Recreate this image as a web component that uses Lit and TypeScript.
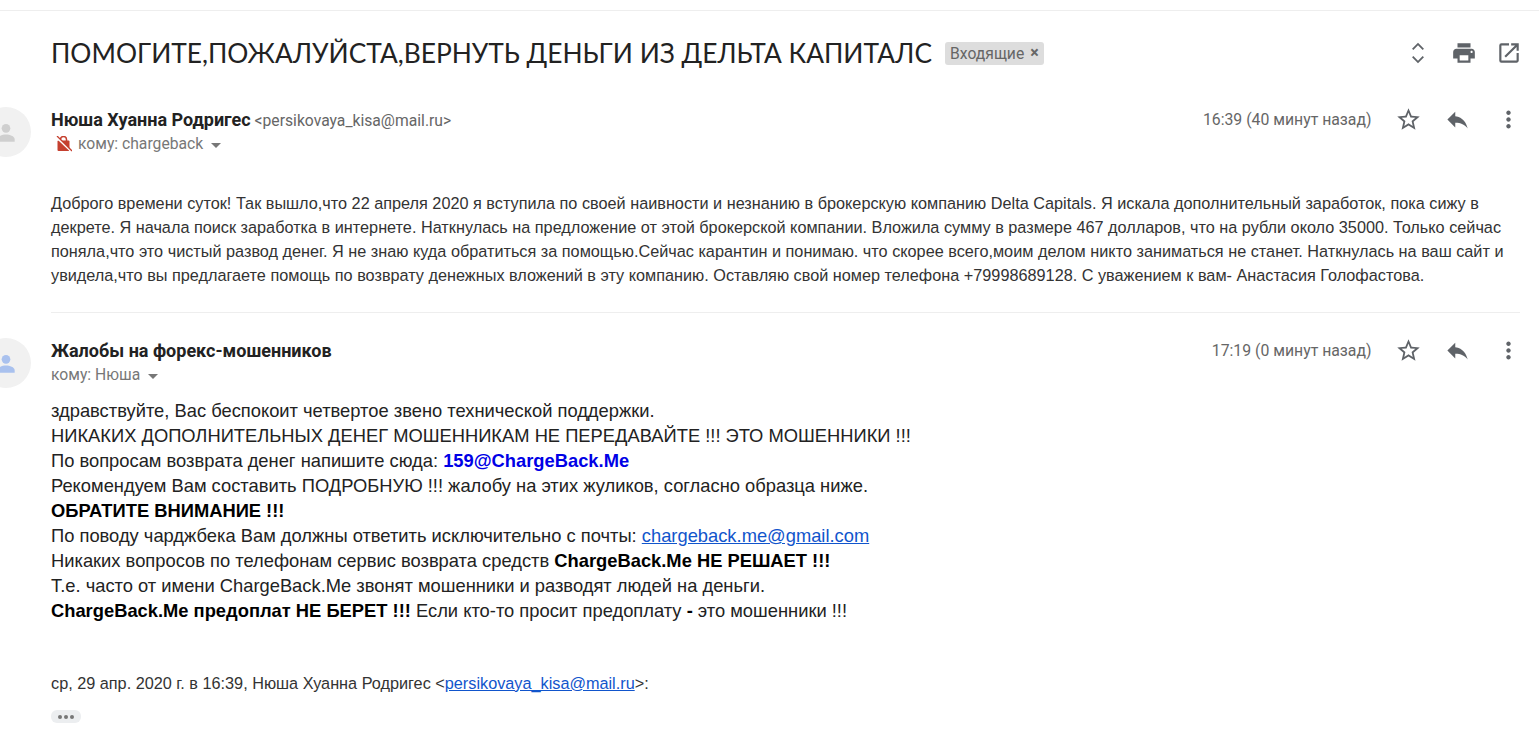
import { LitElement, html, css, svg } from "lit";
import { customElement } from "lit/decorators.js";

const star = svg`<path d="M22 9.24l-7.19-.62L12 2 9.19 8.63 2 9.24l5.46 4.73L5.82 21 12 17.27 18.18 21l-1.63-7.03L22 9.24zM12 15.4l-3.76 2.27 1-4.28-3.32-2.88 4.38-.38L12 6.1l1.71 4.04 4.38.38-3.32 2.88 1 4.28L12 15.4z"/>`;
const reply = svg`<path d="M10 9V5l-7 7 7 7v-4.1c5 0 8.5 1.6 11 5.1-1-5-4-10-11-11z"/>`;
const more = svg`<path d="M12 8c1.1 0 2-.9 2-2s-.9-2-2-2-2 .9-2 2 .9 2 2 2zm0 2c-1.1 0-2 .9-2 2s.9 2 2 2 2-.9 2-2-.9-2-2-2zm0 6c-1.1 0-2 .9-2 2s.9 2 2 2 2-.9 2-2-.9-2-2-2z"/>`;
const person = svg`<circle cx="12" cy="8.6" r="4"/><path d="M12 14.4c-3.4 0-8 1.6-8 4.2V21h16v-2.4c0-2.6-4.6-4.2-8-4.2z"/>`;

@customElement("app-root")
export class AppRoot extends LitElement {
  static styles = css`
    :host { display: block; height: 753px; overflow: hidden; background: #fff; color: #222; font-family: "Liberation Sans", Arial, sans-serif; }
    .page { padding-top: 10px; }
    .topline { height: 1px; background: #eee; }
    .subject { display: flex; align-items: center; height: 84px; padding: 0 17px 0 51px; }
    .title { font-family: Lato, sans-serif; font-size: 26.33px; color: #222; white-space: nowrap; }
    .chip { display: flex; align-items: center; gap: 6px; margin-left: 13px; height: 23px; padding: 0 5px; background: #ddd; border-radius: 3px; color: #666; font: 15.7px Roboto, sans-serif; }
    .chip b { font-weight: 700; font-size: 16px; line-height: 1; }
    .top-icons { margin-left: auto; display: flex; gap: 19.5px; align-items: center; }
    .top-icons svg { width: 26px; height: 26px; fill: #5f6368; display: block; }
    .msg { display: grid; grid-template-columns: 51px 1fr; }
    .avatar-cell { position: relative; }
    .avatar { position: absolute; left: -19px; top: 0; width: 50px; height: 50px; border-radius: 50%; background: #f1f1f1; display: flex; align-items: center; justify-content: center; }
    .avatar svg { width: 26px; height: 26px; fill: #cfcfcf; }
    .avatar.blue svg { fill: #a9c1ee; }
    .head { display: flex; justify-content: space-between; padding-right: 17px; }
    .from { font: 16px/26px Roboto, sans-serif; white-space: nowrap; }
    .name { font-weight: 700; font-size: 18px; color: #222; }
    .addr { font-size: 15.7px; color: #666; }
    .to { display: flex; align-items: center; font: 15.7px/24px Roboto, sans-serif; color: #777; height: 20px; }
    .caret { width: 0; height: 0; border: 5px solid transparent; border-top-color: #777; border-bottom: 0; margin-left: 8px; margin-top: 2px; }
    .flag { width: 16px; height: 16px; margin: 0 6px 0 5px; display: block; }
    .actions { display: flex; align-items: center; height: 24px; }
    .time { font: 15.8px Roboto, sans-serif; color: #666; margin-right: 23.5px; }
    .actions svg { width: 27px; height: 27px; flex: none; fill: #5f6368; display: block; }
    .actions .reply { margin-left: 22px; }
    .actions .dots { margin-left: 24px; }
    .body1 { font: 16.25px/24px "Liberation Sans", Arial, sans-serif; color: #333; margin-top: 37px; padding-right: 17px; }
    .divider { height: 1px; background: #eee; margin: 25px 19px 0 0; }
    .body2 { font: 18.33px/25px "Liberation Sans", Arial, sans-serif; color: #222; margin-top: 13px; white-space: nowrap; }
    .body2 strong { color: #000; }
    .blue-link { color: #0000e6; font-weight: 700; }
    a { color: #1155cc; }
    .quote { font: 16.25px/20px "Liberation Sans", Arial, sans-serif; color: #333; margin-top: 50px; }
    .ell { margin-top: 17px; width: 30px; height: 13px; background: #eceef0; border-radius: 6px; display: flex; align-items: center; justify-content: center; gap: 2px; }
    .ell i { width: 4px; height: 4px; border-radius: 50%; background: #777; display: block; }
    .msg1 { padding-top: 12px; }
    .msg2 { padding-top: 25px; }
  `;

  private actions(time: string) {
    return html`<div class="actions">
      <span class="time">${time}</span>
      <svg viewBox="0 0 24 24">${star}</svg>
      <svg class="reply" viewBox="0 0 24 24">${reply}</svg>
      <svg class="dots" viewBox="0 0 24 24">${more}</svg>
    </div>`;
  }

  render() {
    return html`<div class="page">
      <div class="topline"></div>
      <div class="subject">
        <span class="title">ПОМОГИТЕ,ПОЖАЛУЙСТА,ВЕРНУТЬ ДЕНЬГИ ИЗ ДЕЛЬТА КАПИТАЛС</span>
        <span class="chip">Входящие <b>×</b></span>
        <div class="top-icons">
          <svg viewBox="0 0 24 24"><path d="M12 2.5 6.500 8l1.200 1.200L12 4.900l4.300 4.300L17.500 8zM12 21.500l5.500-5.500-1.200-1.200-4.300 4.300-4.300-4.300L6.500 16z"/></svg>
          <svg viewBox="0 0 24 24"><path d="M19 8H5c-1.660 0-3 1.340-3 3v6h4v4h12v-4h4v-6c0-1.660-1.340-3-3-3zm-3 11H8v-5h8v5zm3-7c-.55 0-1-.45-1-1s.45-1 1-1 1 .45 1 1-.45 1-1 1zm-1-9H6v4h12V3z"/></svg>
          <svg viewBox="0 0 24 24"><path d="M19 19H5V5h7V3H5a2 2 0 0 0-2 2v14a2 2 0 0 0 2 2h14c1.100 0 2-.9 2-2v-7h-2v7zM14 3v2h3.590l-9.830 9.830 1.410 1.410L19 6.410V10h2V3h-7z"/></svg>
        </div>
      </div>
      <div class="msg msg1">
        <div class="avatar-cell"><div class="avatar"><svg viewBox="0 0 24 24">${person}</svg></div></div>
        <div>
          <div class="head">
            <div>
              <div class="from"><span class="name">Нюша Хуанна Родригес</span> <span class="addr">&lt;persikovaya_kisa@mail.ru&gt;</span></div>
              <div class="to">
                <svg class="flag" viewBox="0 0 16 16"><path fill="none" stroke="#c5402f" stroke-width="1.500" d="M4.500 5V3.500a3 3 0 0 1 6 0V5"/><rect fill="#c5402f" x="1.500" y="4.500" width="12" height="10.500" rx="1"/><path stroke="#fff" stroke-width="2" d="M0 1l15 14"/><path stroke="#c5402f" stroke-width="1.300" d="M1 0l15 15"/></svg>
                кому: chargeback<span class="caret"></span>
              </div>
            </div>
            ${this.actions("16:39 (40 минут назад)")}
          </div>
          <div class="body1">Доброго времени суток! Так вышло,что 22 апреля 2020 я вступила по своей наивности и незнанию в брокерскую компанию Delta Capitals. Я искала дополнительный заработок, пока сижу в декрете. Я начала поиск заработка в интернете. Наткнулась на предложение от этой брокерской компании. Вложила сумму в размере 467 долларов, что на рубли около 35000. Только сейчас поняла,что это чистый развод денег. Я не знаю куда обратиться за помощью.Сейчас карантин и понимаю. что скорее всего,моим делом никто заниматься не станет. Наткнулась на ваш сайт и увидела,что вы предлагаете помощь по возврату денежных вложений в эту компанию. Оставляю свой номер телефона +79998689128. С уважением к вам- Анастасия Голофастова.</div>
          <div class="divider"></div>
        </div>
      </div>
      <div class="msg msg2">
        <div class="avatar-cell"><div class="avatar blue"><svg viewBox="0 0 24 24">${person}</svg></div></div>
        <div>
          <div class="head">
            <div>
              <div class="from"><span class="name">Жалобы на форекс-мошенников</span></div>
              <div class="to">кому: Нюша<span class="caret"></span></div>
            </div>
            ${this.actions("17:19 (0 минут назад)")}
          </div>
          <div class="body2">
            здравствуйте, Вас беспокоит четвертое звено технической поддержки.<br>
            НИКАКИХ ДОПОЛНИТЕЛЬНЫХ ДЕНЕГ МОШЕННИКАМ НЕ ПЕРЕДАВАЙТЕ !!! ЭТО МОШЕННИКИ !!!<br>
            По вопросам возврата денег напишите сюда: <span class="blue-link">159@ChargeBack.Me</span><br>
            Рекомендуем Вам составить ПОДРОБНУЮ !!! жалобу на этих жуликов, согласно образца ниже.<br>
            <strong>ОБРАТИТЕ ВНИМАНИЕ !!!</strong><br>
            По поводу чарджбека Вам должны ответить исключительно с почты: <a href="#">chargeback.me@gmail.com</a><br>
            Никаких вопросов по телефонам сервис возврата средств <strong>ChargeBack.Me НЕ РЕШАЕТ !!!</strong><br>
            Т.е. часто от имени ChargeBack.Me звонят мошенники и разводят людей на деньги.<br>
            <strong>ChargeBack.Me предоплат НЕ БЕРЕТ !!!</strong> Если кто-то просит предоплату <strong>-</strong> это мошенники !!!
          </div>
          <div class="quote">ср, 29 апр. 2020 г. в 16:39, Нюша Хуанна Родригес &lt;<a href="#">persikovaya_kisa@mail.ru</a>&gt;:</div>
          <div class="ell"><i></i><i></i><i></i></div>
        </div>
      </div>
    </div>`;
  }
}
